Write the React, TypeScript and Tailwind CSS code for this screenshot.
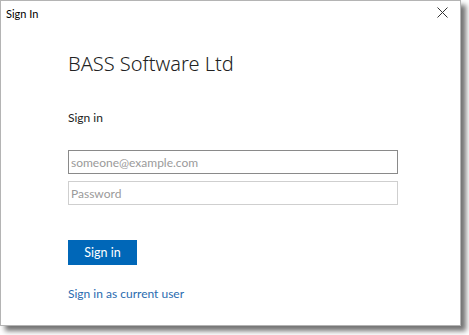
import React from 'react';

export default function App() {
  return (
    <div className="w-[469px] h-[335px] bg-white" style={{ fontFamily: 'Lato, "Noto Sans", sans-serif' }}>
      <div className="w-[461px] h-[326px] bg-white border border-[#b4b4b4] shadow-[5px_5px_5px_rgba(0,0,0,0.55)] flex flex-col">
        <div className="flex items-start justify-between h-[30px] pl-[5px] pr-[12px] pt-[5px]">
          <span className="text-[11px] leading-[16px] text-black">Sign In</span>
          <svg width="11" height="11" viewBox="0 0 11 11" className="mt-[1px]">
            <path d="M0.5 0.5 L10.5 10.5 M10.5 0.5 L0.5 10.5" stroke="#333" strokeWidth="1" fill="none" />
          </svg>
        </div>
        <div className="pl-[67px] flex flex-col">
          <h1
            className="text-[20px] leading-[28px] font-light text-[#222] mt-[19px]"
            style={{ fontFamily: '"Noto Sans", sans-serif' }}
          >
            BASS Software Ltd
          </h1>
          <p className="text-[12px] leading-[18px] text-[#222] mt-[31px]">Sign in</p>
          <div className="mt-[23px] flex flex-col gap-[7px]">
            <input
              placeholder="someone@example.com"
              className="w-[330px] h-[24px] border border-[#8a8a8a] px-[2px] text-[12px] outline-none placeholder:text-[#9a9a9a]"
            />
            <input
              type="password"
              placeholder="Password"
              className="w-[330px] h-[24px] border border-[#cfcfcf] px-[2px] text-[12px] outline-none placeholder:text-[#9a9a9a]"
            />
          </div>
          <button className="mt-[35px] w-[69px] h-[25px] bg-[#0067b8] text-white text-[12.5px] leading-[25px]">
            Sign in
          </button>
          <a className="mt-[20px] text-[12px] leading-[18px] text-[#2a6bb0]">Sign in as current user</a>
        </div>
      </div>
    </div>
  );
}
